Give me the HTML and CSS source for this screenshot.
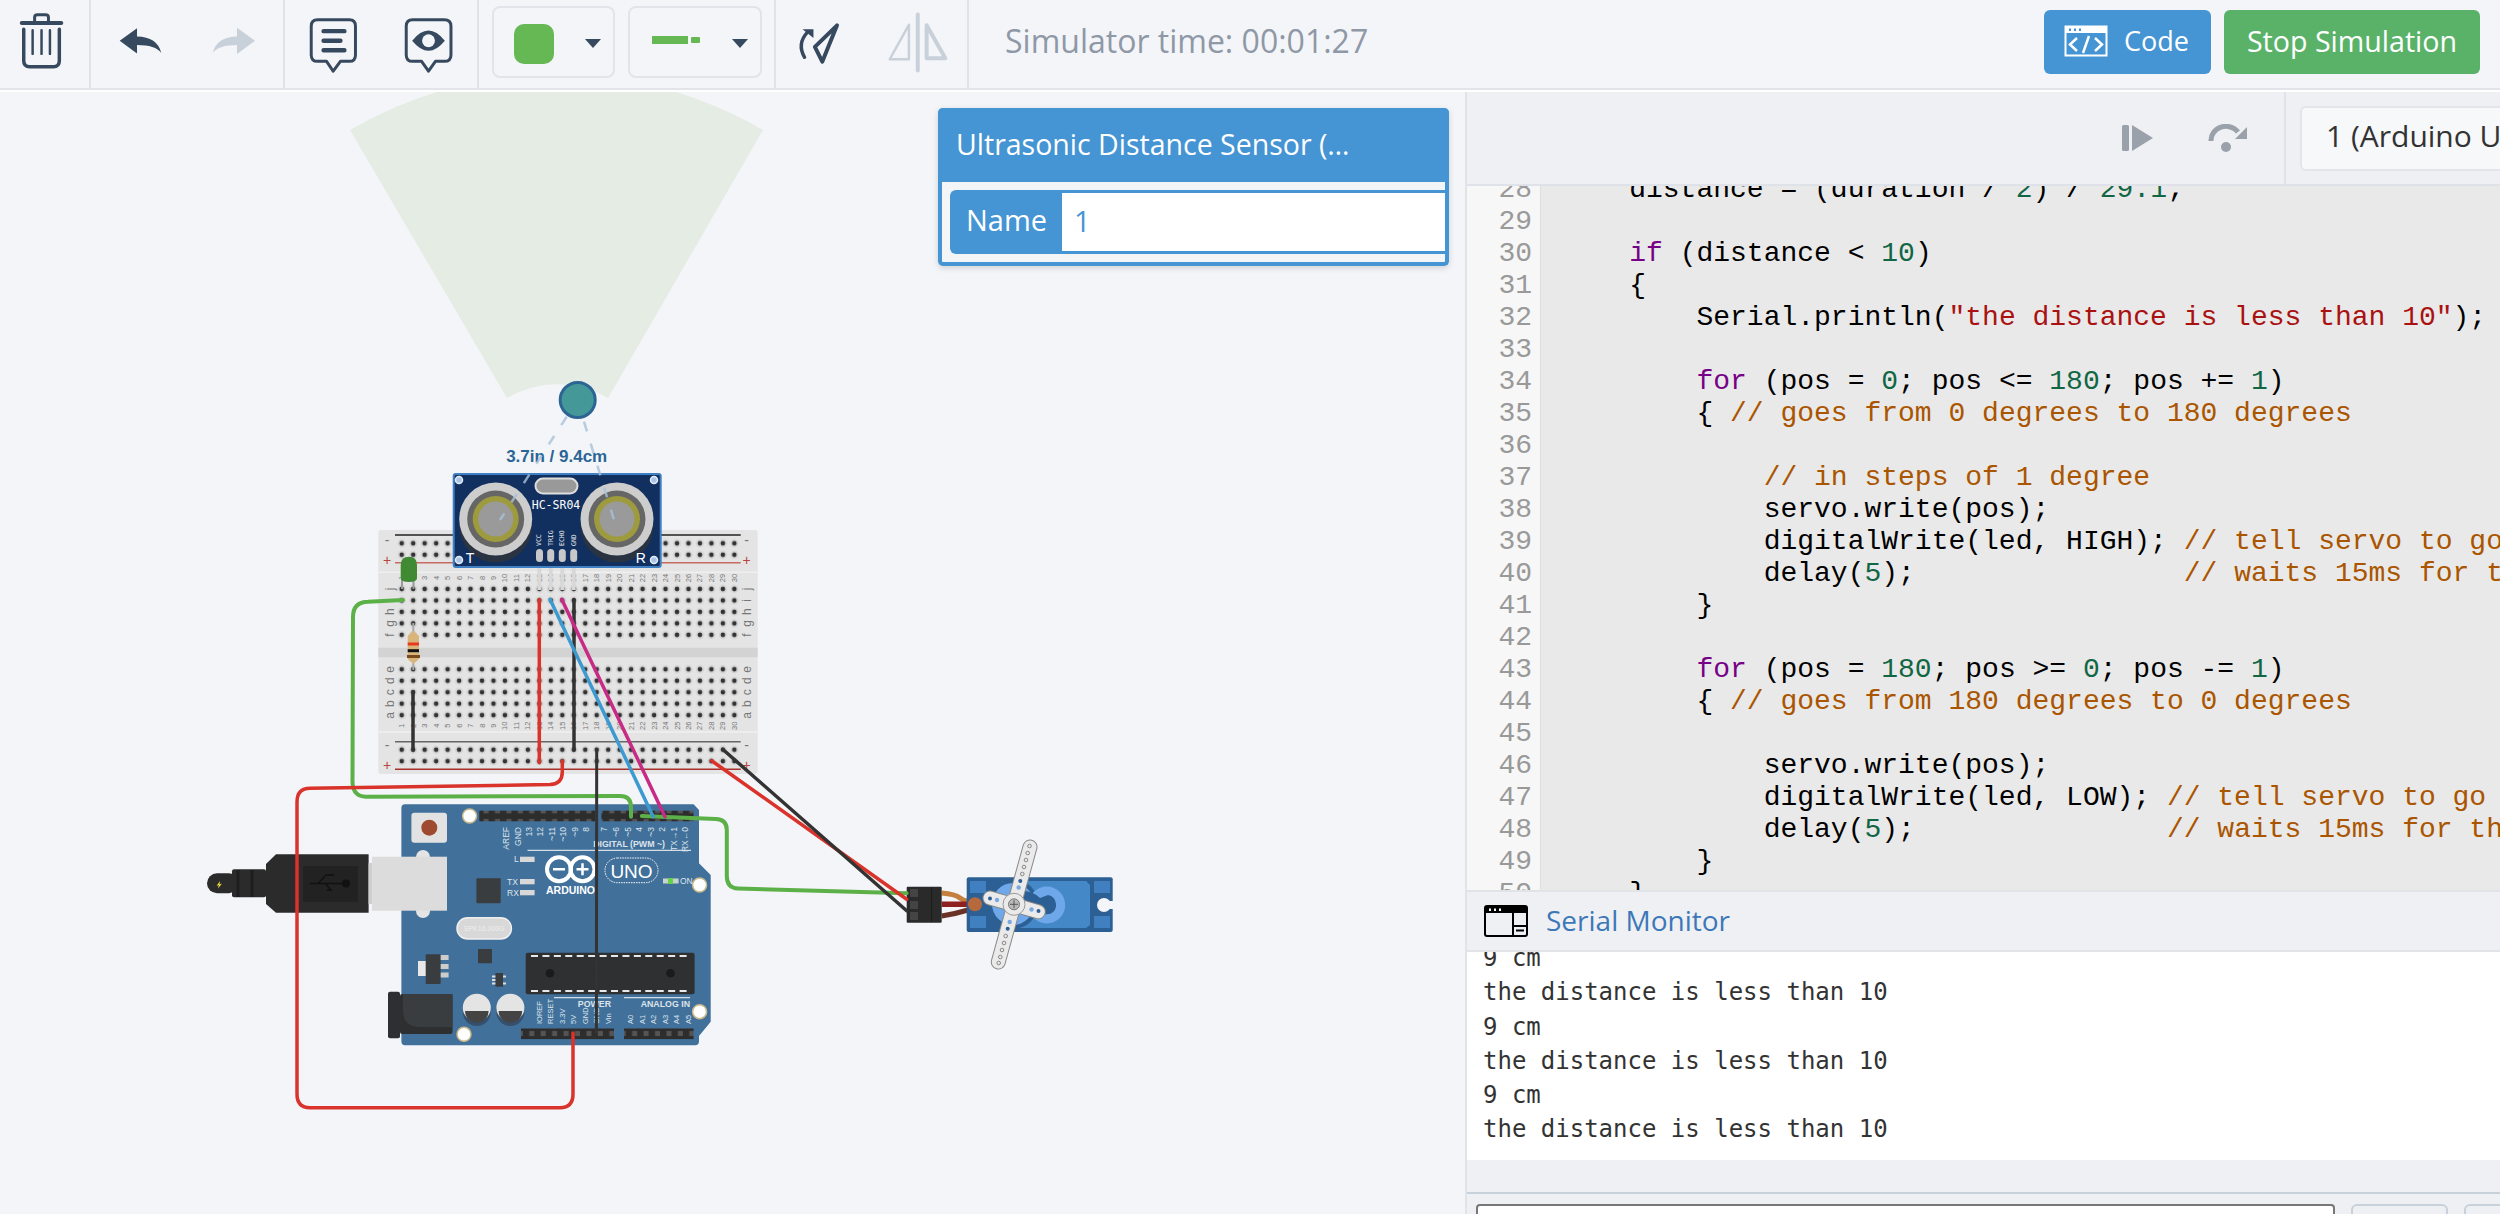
FILE: index.html
```html
<!DOCTYPE html>
<html lang="en">
<head>
    <meta charset="UTF-8">
    <title>Simulator</title>
    <link rel="stylesheet" href="styles.css">
</head>
<body>
    <header class="toolbar">
        <div class="tool-group group-trash">
            <svg class="tool-icon" width="90" height="88" viewBox="0 0 90 88">
                <g fill="none" stroke="#36495f" stroke-width="3.5" stroke-linecap="round">
                    <path d="M22 22.7H62" stroke-width="4"/>
                    <path d="M35 21V17Q35 14.5 38 14.5H46Q49 14.5 49 17V21" stroke-width="3"/>
                    <path d="M24 29V61Q24 67 30 67H54Q60 67 60 61V29"/>
                    <path d="M33 30V54M42 30V54M50.5 30V54" stroke-width="2.5"/>
                </g>
            </svg>
        </div>
        <div class="tool-group group-history">
            <svg class="tool-icon" width="194" height="88" viewBox="91 0 194 88">
                <path d="M120 40.7L137.5 28V36.5Q158 37 162 53Q156 45 137.5 45V53.5Z" fill="#36495f"/>
                <path d="M256.7 40.7L238.5 27.5V36.5Q218 37 214 53Q220 45 238.5 45V54Z" fill="#c8d0da"/>
            </svg>
        </div>
        <div class="tool-group group-notes">
            <svg class="tool-icon" width="194" height="88" viewBox="285 0 194 88">
                <g fill="none" stroke="#36495f" stroke-width="3" stroke-linejoin="round">
                    <path d="M318 19.5H350Q356.2 19.5 356.2 26V55Q356.2 61.5 350 61.5H341L333.7 71.5L327 61.5H318Q311.5 61.5 311.5 55V26Q311.5 19.5 318 19.5Z"/>
                    <path d="M414 19.5H446Q452.7 19.5 452.7 26V55Q452.7 61.5 446 61.5H437L430 71.5L423 61.5H414Q407.5 61.5 407.5 55V26Q407.5 19.5 414 19.5Z"/>
                    <path d="M324 31H345M324 40.7H341M324 50.3H345" stroke-width="4.5" stroke-linecap="round"/>
                </g>
                <path d="M413.5 40.7Q430 20 446.5 40.7Q430 61 413.5 40.7Z" fill="#36495f"/>
                <circle cx="430" cy="40.7" r="6.5" fill="#f3f5f8"/>
            </svg>
        </div>
        <div class="tool-group group-style">
            <button class="style-btn style-fill"><span class="swatch"></span><span class="caret"></span></button>
            <button class="style-btn style-line"><span class="line-long"></span><span class="line-short"></span><span class="caret"></span></button>
        </div>
        <div class="tool-group group-transform">
            <svg class="tool-icon" width="194" height="88" viewBox="776 0 194 88">
                <path d="M838 25L815.5 47L823 62Z" fill="none" stroke="#36495f" stroke-width="4" stroke-linejoin="round"/>
                <path d="M805 57.5Q797 44 808 32" fill="none" stroke="#36495f" stroke-width="3.5" stroke-linecap="round"/>
                <path d="M803 29H814V38Z" fill="#36495f"/>
                <path d="M920 14V71" stroke="#c8d0da" stroke-width="4" stroke-linecap="round"/>
                <path d="M911 24.5L891.5 59.5H911Z" fill="none" stroke="#c8d0da" stroke-width="2.5" stroke-linejoin="round"/>
                <path d="M929 25L948 58.5H929Z" fill="none" stroke="#c8d0da" stroke-width="4" stroke-linejoin="round"/>
            </svg>
        </div>
        <div class="sim-time">Simulator time: 00:01:27</div>
        <div class="sim-actions">
            <button class="btn btn-code">
                <svg width="44" height="32" viewBox="0 0 44 32">
                    <path d="M1.5 1.5H42.5V30.5H1.5Z" fill="none" stroke="#fff" stroke-width="2"/>
                    <path d="M1 1H43V8H1Z" fill="#fff"/>
                    <path d="M5 3.5H7V6H5ZM10 3.5H12V6H10ZM15 3.5H17V6H15Z" fill="#4594d3"/>
                    <path d="M13 13L6 19.5L13 26M31 13L38 19.5L31 26M25 11L19 28" fill="none" stroke="#fff" stroke-width="2.5"/>
                </svg>
                Code
            </button>
            <button class="btn btn-stop">Stop Simulation</button>
        </div>
    </header>

    <div class="workspace">
        <main class="canvas">
            <svg class="circuit" width="1465" height="1122" viewBox="0 92 1465 1122">
                <defs>
                    <pattern id="holes" x="0" y="0" width="11.47" height="11.47" patternUnits="userSpaceOnUse">
                        <circle cx="5.735" cy="5.735" r="4.2" fill="#d5d5d5"/>
                        <circle cx="5.735" cy="5.735" r="2.3" fill="#333"/>
                    </pattern>
                    <pattern id="pins" x="0" y="0" width="11.43" height="10.6" patternUnits="userSpaceOnUse">
                        <rect width="11.43" height="10.6" fill="#2d2d2d"/>
                        <rect x="3.5" y="2.8" width="5" height="5" fill="#555"/>
                    </pattern>
                    <g id="col-numbers">
                        <text x="401.7" y="0" transform="rotate(-90 401.7 0)">1</text>
                        <text x="413.2" y="0" transform="rotate(-90 413.2 0)">2</text>
                        <text x="424.6" y="0" transform="rotate(-90 424.6 0)">3</text>
                        <text x="436.1" y="0" transform="rotate(-90 436.1 0)">4</text>
                        <text x="447.6" y="0" transform="rotate(-90 447.6 0)">5</text>
                        <text x="459.1" y="0" transform="rotate(-90 459.1 0)">6</text>
                        <text x="470.5" y="0" transform="rotate(-90 470.5 0)">7</text>
                        <text x="482" y="0" transform="rotate(-90 482 0)">8</text>
                        <text x="493.5" y="0" transform="rotate(-90 493.5 0)">9</text>
                        <text x="504.9" y="0" transform="rotate(-90 504.9 0)">10</text>
                        <text x="516.4" y="0" transform="rotate(-90 516.4 0)">11</text>
                        <text x="527.9" y="0" transform="rotate(-90 527.9 0)">12</text>
                        <text x="539.3" y="0" transform="rotate(-90 539.3 0)">13</text>
                        <text x="550.8" y="0" transform="rotate(-90 550.8 0)">14</text>
                        <text x="562.3" y="0" transform="rotate(-90 562.3 0)">15</text>
                        <text x="573.8" y="0" transform="rotate(-90 573.8 0)">16</text>
                        <text x="585.2" y="0" transform="rotate(-90 585.2 0)">17</text>
                        <text x="596.7" y="0" transform="rotate(-90 596.7 0)">18</text>
                        <text x="608.2" y="0" transform="rotate(-90 608.2 0)">19</text>
                        <text x="619.6" y="0" transform="rotate(-90 619.6 0)">20</text>
                        <text x="631.1" y="0" transform="rotate(-90 631.1 0)">21</text>
                        <text x="642.6" y="0" transform="rotate(-90 642.6 0)">22</text>
                        <text x="654" y="0" transform="rotate(-90 654 0)">23</text>
                        <text x="665.5" y="0" transform="rotate(-90 665.5 0)">24</text>
                        <text x="677" y="0" transform="rotate(-90 677 0)">25</text>
                        <text x="688.5" y="0" transform="rotate(-90 688.5 0)">26</text>
                        <text x="699.9" y="0" transform="rotate(-90 699.9 0)">27</text>
                        <text x="711.4" y="0" transform="rotate(-90 711.4 0)">28</text>
                        <text x="722.9" y="0" transform="rotate(-90 722.9 0)">29</text>
                        <text x="734.3" y="0" transform="rotate(-90 734.3 0)">30</text>
                    </g>
                    <g id="row-letters">
                        <text x="0" y="589" transform="rotate(-90 0 589)">j</text>
                        <text x="0" y="600.3" transform="rotate(-90 0 600.3)">i</text>
                        <text x="0" y="611.7" transform="rotate(-90 0 611.7)">h</text>
                        <text x="0" y="623.3" transform="rotate(-90 0 623.3)">g</text>
                        <text x="0" y="635" transform="rotate(-90 0 635)">f</text>
                        <text x="0" y="669.3" transform="rotate(-90 0 669.3)">e</text>
                        <text x="0" y="680.7" transform="rotate(-90 0 680.7)">d</text>
                        <text x="0" y="692.3" transform="rotate(-90 0 692.3)">c</text>
                        <text x="0" y="703.7" transform="rotate(-90 0 703.7)">b</text>
                        <text x="0" y="715.3" transform="rotate(-90 0 715.3)">a</text>
                    </g>
                </defs>

                <!-- sensor range -->
                <path d="M350 130A410 410 0 0 1 763 130L608 398A100 100 0 0 0 507 398Z" fill="#e5ece4"/>
                <circle cx="577.7" cy="400" r="17.5" fill="#459898" stroke="#2c6594" stroke-width="3"/>
                <text class="range-label" x="556.7" y="462">3.7in / 9.4cm</text>

                <!-- breadboard -->
                <rect x="378.3" y="530" width="379.4" height="244" rx="3" fill="#e4e4e4"/>
                <path d="M378.3 572.3H757.7M378.3 732H757.7" stroke="#efefef" stroke-width="1.5"/>
                <rect x="378.3" y="647.7" width="379.4" height="9.6" fill="#d3d3d3"/>
                <path d="M395 535H740.7" stroke="#222" stroke-width="1.5"/>
                <path d="M395 562.7H740.7" stroke="#c76a62" stroke-width="1.5"/>
                <path d="M395 741.7H740.7" stroke="#666" stroke-width="1.5"/>
                <path d="M395 769.3H740.7" stroke="#a8302a" stroke-width="1.5"/>
                <rect transform="translate(396 537.6)" width="344.1" height="22.94" fill="url(#holes)"/>
                <rect transform="translate(396 583.27)" width="344.1" height="57.35" fill="url(#holes)"/>
                <rect transform="translate(396 663.57)" width="344.1" height="57.35" fill="url(#holes)"/>
                <rect transform="translate(396 744)" width="344.1" height="22.94" fill="url(#holes)"/>
                <use href="#col-numbers" y="578"/>
                <use href="#col-numbers" y="725.7"/>
                <use href="#row-letters" x="390"/>
                <use href="#row-letters" x="746.7"/>
                <g class="bb-sign-minus">
                    <text x="387" y="545">-</text><text x="746.7" y="545">-</text>
                    <text x="387" y="750">-</text><text x="746.7" y="750">-</text>
                </g>
                <g class="bb-sign-plus">
                    <text x="387" y="565">+</text><text x="746.7" y="565">+</text>
                    <text x="387" y="770">+</text><text x="746.7" y="770">+</text>
                </g>

                <!-- led and resistor -->
                <path d="M402 576V589M413.5 576V589" stroke="#999" stroke-width="2"/>
                <path d="M400.7 578V565Q400.7 556.7 409 556.7Q417 556.7 417 565V578Q417 582 409 582Q400.7 582 400.7 578Z" fill="#3f8a33"/>
                <path d="M413.3 623V670" stroke="#aaa" stroke-width="2"/>
                <path d="M413.3 630.7L419 636V659L413.3 664L407.7 659V636Z" fill="#d9b57b"/>
                <path d="M407.7 644H419" stroke="#e8391f" stroke-width="3"/>
                <path d="M407.7 650.7H419" stroke="#111" stroke-width="3"/>
                <path d="M407 656.5H420" stroke="#7a4a1e" stroke-width="3"/>

                <!-- arduino -->
                <path d="M405 804.3H693.6L699 810V863.3L710.7 875V1021.7L699 1036V1041Q699 1045.3 695 1045.3H405Q401.4 1045.3 401.4 1041V808Q401.4 804.3 405 804.3Z" fill="#41709a"/>
                <rect x="416" y="850" width="14" height="68" rx="7" fill="#e4e4e4"/>
                <rect x="479.3" y="810.7" width="116.1" height="10.6" fill="url(#pins)"/>
                <rect x="601.4" y="810.7" width="92.2" height="10.6" fill="url(#pins)"/>
                <rect x="521" y="1028.5" width="93" height="10.6" fill="url(#pins)"/>
                <rect x="624" y="1028.5" width="69.6" height="10.6" fill="url(#pins)"/>
                <rect x="411.4" y="812.7" width="35.6" height="30" rx="3" fill="#e2e2e2"/>
                <circle cx="429.3" cy="827.7" r="8" fill="#9e4a30"/>
                <g fill="#fff" stroke="#c9b98a" stroke-width="1.5">
                    <circle cx="469.6" cy="816" r="7"/>
                    <circle cx="699.6" cy="885" r="7"/>
                    <circle cx="699.6" cy="1011.7" r="7"/>
                    <circle cx="464" cy="1034.3" r="7"/>
                </g>
                <rect x="476.4" y="878.3" width="24.3" height="25" rx="1" fill="#3a3d40"/>
                <g fill="#d8d8d8">
                    <rect x="520" y="856.7" width="14.6" height="5.3"/>
                    <rect x="520" y="879" width="14.6" height="5.3"/>
                    <rect x="520" y="890" width="14.6" height="5.3"/>
                </g>
                <g class="ard-label">
                    <text x="514" y="862">L</text>
                    <text x="507" y="885">TX</text>
                    <text x="507" y="896">RX</text>
                    <text x="680" y="884">ON</text>
                </g>
                <g class="ard-heading">
                    <text x="665" y="847">DIGITAL (PWM ~)</text>
                    <text x="611" y="1007">POWER</text>
                    <text x="690" y="1007">ANALOG IN</text>
                </g>
                <path d="M527.5 850.3H691M554 997.7H611.4M624 997.7H690" stroke="#d5dde6" stroke-width="1.2"/>
                <g class="ard-pin-top">
                    <text transform="translate(509 827) rotate(-90)">AREF</text>
                    <text transform="translate(520.5 827) rotate(-90)">GND</text>
                    <text transform="translate(532 827) rotate(-90)">13</text>
                    <text transform="translate(543.3 827) rotate(-90)">12</text>
                    <text transform="translate(554.7 827) rotate(-90)">~11</text>
                    <text transform="translate(566 827) rotate(-90)">~10</text>
                    <text transform="translate(577.5 827) rotate(-90)">~9</text>
                    <text transform="translate(589 827) rotate(-90)">8</text>
                    <text transform="translate(607 827) rotate(-90)">7</text>
                    <text transform="translate(619 827) rotate(-90)">~6</text>
                    <text transform="translate(630.5 827) rotate(-90)">~5</text>
                    <text transform="translate(642 827) rotate(-90)">4</text>
                    <text transform="translate(653.5 827) rotate(-90)">~3</text>
                    <text transform="translate(665 827) rotate(-90)">2</text>
                    <text transform="translate(676.5 827) rotate(-90)">TX→1</text>
                    <text transform="translate(688 827) rotate(-90)">RX←0</text>
                </g>
                <g class="ard-pin-bottom">
                    <text transform="translate(542 1024) rotate(-90)">IOREF</text>
                    <text transform="translate(553 1024) rotate(-90)">RESET</text>
                    <text transform="translate(564.5 1024) rotate(-90)">3.3V</text>
                    <text transform="translate(576 1024) rotate(-90)">5V</text>
                    <text transform="translate(587.5 1024) rotate(-90)">GND</text>
                    <text transform="translate(599 1024) rotate(-90)">GND</text>
                    <text transform="translate(610.5 1024) rotate(-90)">Vin</text>
                    <text transform="translate(633 1024) rotate(-90)">A0</text>
                    <text transform="translate(644.5 1024) rotate(-90)">A1</text>
                    <text transform="translate(656 1024) rotate(-90)">A2</text>
                    <text transform="translate(667.5 1024) rotate(-90)">A3</text>
                    <text transform="translate(679 1024) rotate(-90)">A4</text>
                    <text transform="translate(690.5 1024) rotate(-90)">A5</text>
                </g>
                <g fill="none" stroke="#fff" stroke-width="4">
                    <circle cx="559" cy="869.3" r="12"/>
                    <circle cx="582.5" cy="869.3" r="12"/>
                </g>
                <path d="M553 869.3H565M576.5 869.3H588.5M582.5 863.3V875.3" stroke="#fff" stroke-width="2.5"/>
                <text class="ard-logo" x="546" y="893.5">ARDUINO</text>
                <rect x="605" y="858" width="53" height="24.7" rx="12.3" fill="none" stroke="#fff" stroke-width="1" stroke-dasharray="1.5 1"/>
                <text class="ard-uno" x="631.5" y="877.5">UNO</text>
                <rect x="663" y="878.5" width="15.6" height="5" fill="#c9d3cc"/>
                <rect x="668" y="878" width="5" height="6" fill="#62d24a"/>
                <rect x="457" y="917.7" width="54.4" height="21.3" rx="10.6" fill="#d8d8d8" stroke="#eee" stroke-width="1.5"/>
                <text class="ard-crystal" x="484.2" y="931">SPK16.000G</text>
                <rect x="418" y="961" width="8" height="15" fill="#e8e8e8"/>
                <rect x="425.7" y="954.3" width="15" height="29.7" rx="1" fill="#3a3d40"/>
                <path d="M440.7 957.5H448.6M440.7 966.5H448.6M440.7 975H448.6" stroke="#ccc" stroke-width="5"/>
                <rect x="478" y="949" width="14" height="14.3" rx="1" fill="#3a3d40"/>
                <rect x="495.4" y="973" width="7.6" height="13.7" fill="#3a3d40"/>
                <path d="M492 976.5H495.4M492 980H495.4M492 983.5H495.4M503 976.5H506M503 983.5H506" stroke="#ddd" stroke-width="2"/>
                <rect x="525.7" y="952.7" width="168.9" height="41.6" rx="2" fill="#2f3032"/>
                <path d="M531 956H691M531 991H691" stroke="#e8e8e8" stroke-width="2" stroke-dasharray="7 4.43"/>
                <circle cx="550" cy="973.3" r="4.3" fill="#1b1b1b"/>
                <circle cx="670.4" cy="973.3" r="4.3" fill="#1b1b1b"/>
                <rect x="388" y="991.7" width="12" height="46.6" rx="2" fill="#2e2f31"/>
                <rect x="400" y="994" width="52.5" height="40" rx="2" fill="#2e2f31"/>
                <path d="M403 994H452.5V1027H420Q403 1027 403 1010Z" fill="#3a3d40"/>
                <g>
                    <circle cx="476.8" cy="1012" r="14" fill="#35506c"/>
                    <circle cx="510.4" cy="1012" r="14" fill="#35506c"/>
                    <circle cx="476.8" cy="1007.7" r="14" fill="#e4e4e4"/>
                    <circle cx="510.4" cy="1007.7" r="14" fill="#e4e4e4"/>
                    <path d="M465 1011H488.6A11.5 11.5 0 0 1 465 1011ZM498.6 1011H522.2A11.5 11.5 0 0 1 498.6 1011Z" fill="#444"/>
                </g>

                <!-- usb cable -->
                <rect x="207" y="873.3" width="32" height="20" rx="10" fill="#2b2b2b"/>
                <path d="M216.5 886L220 881L219.5 884.5L222 883.5L218 888.5L218.8 885Z" fill="#f2e13a"/>
                <rect x="232" y="869.3" width="34" height="28" rx="2" fill="#2b2b2b"/>
                <path d="M238 870V897M252 870V897" stroke="#1e1e1e" stroke-width="3"/>
                <path d="M276 854.3H368.6V912.7H276L266 904V864Z" fill="#2b2b2b"/>
                <rect x="303" y="866" width="55" height="35.7" fill="#222"/>
                <path d="M310 883.5H346M318 883.5L326 875H334M325 883.5L331 890H327" fill="none" stroke="#111" stroke-width="1.5"/>
                <circle cx="346" cy="883.5" r="4" fill="#111"/>
                <rect x="368.6" y="863" width="4" height="41" fill="#cfcfcf"/>
                <rect x="372" y="856.7" width="75" height="54" fill="#dcdcdc"/>

                <!-- hc-sr04 -->
                <path d="M539.3 567V590M550.7 567V590M562.3 567V590M573.7 567V590" stroke="#d8d8d8" stroke-width="4"/>
                <rect x="453.7" y="474" width="207" height="93" rx="2" fill="#12305f" stroke="#3f7fc4" stroke-width="2"/>
                <g fill="#a9c4e6" stroke="#e4edf7" stroke-width="1.5">
                    <circle cx="459" cy="480" r="3.5"/>
                    <circle cx="654" cy="480" r="3.5"/>
                    <circle cx="459" cy="560" r="3.5"/>
                    <circle cx="654" cy="560" r="3.5"/>
                </g>
                <rect x="535.5" y="478.5" width="42" height="15" rx="7.5" fill="#999" stroke="#ddd" stroke-width="2"/>
                <circle cx="495.7" cy="526" r="36.5" fill="#2a3342"/>
                <circle cx="617" cy="526" r="36.5" fill="#2a3342"/>
                <circle cx="495.7" cy="519" r="36.5" fill="#cdcdcd"/>
                <circle cx="617" cy="519" r="36.5" fill="#cdcdcd"/>
                <circle cx="495.7" cy="519" r="28.5" fill="#666"/>
                <circle cx="617" cy="519" r="28.5" fill="#666"/>
                <circle cx="495.7" cy="519" r="23" fill="#9d9b3d"/>
                <circle cx="617" cy="519" r="23" fill="#9d9b3d"/>
                <circle cx="495.7" cy="519" r="17.5" fill="#9a9a9a"/>
                <circle cx="617" cy="519" r="17.5" fill="#9a9a9a"/>
                <text class="hc-name" x="556" y="508.5">HC-SR04</text>
                <text class="hc-corner" x="470" y="563">T</text>
                <text class="hc-corner" x="640.7" y="563">R</text>
                <g fill="#c8c8c8">
                    <rect x="536" y="549" width="7" height="13" rx="3.5"/>
                    <rect x="547.2" y="549" width="7" height="13" rx="3.5"/>
                    <rect x="558.8" y="549" width="7" height="13" rx="3.5"/>
                    <rect x="570.2" y="549" width="7" height="13" rx="3.5"/>
                </g>
                <g class="hc-pin">
                    <text transform="translate(539.3 546) rotate(-90)">VCC</text>
                    <text transform="translate(550.7 546) rotate(-90)">TRIG</text>
                    <text transform="translate(562.3 546) rotate(-90)">ECHO</text>
                    <text transform="translate(573.7 546) rotate(-90)">GND</text>
                </g>
                <g stroke="#a9c2da" stroke-width="2.5" stroke-dasharray="10 13" opacity="0.8">
                    <path d="M566.7 416.7L500 520"/>
                    <path d="M584 421.7L614 520"/>
                </g>

                <!-- servo -->
                <path d="M941.7 893Q955 894 960 898T968 900" fill="none" stroke="#c57f3f" stroke-width="5"/>
                <path d="M941.7 904.3H985" stroke="#8f2020" stroke-width="5.5"/>
                <path d="M941.7 916Q955 914 968 910" fill="none" stroke="#6a3226" stroke-width="5"/>
                <rect x="966.7" y="877.3" width="146" height="54.7" rx="2" fill="#2c5f93"/>
                <path d="M1002 881H1086L1090 885V925L1086 928H1002Z" fill="#4488c8"/>
                <g fill="#4080c0">
                    <rect x="970" y="881" width="16" height="12"/>
                    <rect x="970" y="916" width="16" height="12"/>
                    <rect x="1094" y="881" width="16" height="12"/>
                    <rect x="1094" y="916" width="16" height="12"/>
                </g>
                <circle cx="1104" cy="905" r="7" fill="#f3f5f8"/>
                <rect x="1104" y="901" width="9" height="8" fill="#f3f5f8"/>
                <circle cx="1013" cy="904" r="25" fill="#2c5f93"/>
                <circle cx="1013" cy="904" r="21" fill="#6fa8ea"/>
                <circle cx="1046.7" cy="905" r="18.5" fill="#6fa8ea"/>
                <path d="M1020 890Q1035 892 1040 898L1048 895A10 10 0 0 1 1050 914Q1040 914 1032 918Z" fill="#2c5f93"/>
                <circle cx="975" cy="904.3" r="7" fill="#b5693d"/>
                <g stroke="#888" stroke-width="15" stroke-linecap="round">
                    <path d="M1030 847L998.3 962"/>
                    <path d="M990 898L1038.3 911.7"/>
                </g>
                <g stroke="#eaeaea" stroke-width="13" stroke-linecap="round">
                    <path d="M1030 847L998.3 962"/>
                    <path d="M990 898L1038.3 911.7"/>
                </g>
                <g fill="#eaeaea" stroke="#888" stroke-width="1">
                    <circle cx="1029.5" cy="846" r="1.8"/>
                    <circle cx="1027.7" cy="853" r="1.8"/>
                    <circle cx="1026" cy="860" r="1.8"/>
                    <circle cx="1024" cy="867" r="1.8"/>
                    <circle cx="1022.3" cy="874" r="1.8"/>
                    <circle cx="1005.7" cy="936" r="1.8"/>
                    <circle cx="1004" cy="943" r="1.8"/>
                    <circle cx="1002" cy="950" r="1.8"/>
                    <circle cx="1000.3" cy="957" r="1.8"/>
                    <circle cx="998.7" cy="963" r="1.8"/>
                </g>
                <g fill="#2c5f93">
                    <circle cx="1020.3" cy="881" r="2"/>
                    <circle cx="1007.7" cy="928.7" r="2"/>
                    <circle cx="990" cy="898.5" r="2"/>
                    <circle cx="1038.5" cy="911" r="2"/>
                </g>
                <g fill="#7aa9e0">
                    <circle cx="1018.7" cy="887.5" r="2.2"/>
                    <circle cx="1009.7" cy="922" r="2.2"/>
                    <circle cx="997" cy="900" r="2.2"/>
                    <circle cx="1031.5" cy="909.5" r="2.2"/>
                </g>
                <circle cx="1014" cy="904.3" r="11" fill="#eaeaea" stroke="#999" stroke-width="1"/>
                <circle cx="1014" cy="904.3" r="5.5" fill="#bbb" stroke="#777" stroke-width="1"/>
                <path d="M1010 904.3H1018M1014 900.3V908.3" stroke="#555" stroke-width="1"/>
                <rect x="906.7" y="886.7" width="35" height="36" rx="1" fill="#2a2a2a"/>
                <path d="M931.5 887V922" stroke="#1b1b1b" stroke-width="1"/>
                <g fill="#444">
                    <rect x="910" y="889" width="8" height="8"/>
                    <rect x="910" y="901" width="8" height="8"/>
                    <rect x="910" y="912" width="8" height="8"/>
                </g>

                <!-- wires -->
                <g fill="none" stroke-linecap="round">
                    <path d="M403 600L368 601.7Q353 602 353 617L352.5 782Q353 796.7 366 796.7L620 796Q631 796 631 807V816.7" stroke="#5cb048" stroke-width="4"/>
                    <path d="M641.8 816L716 819Q726.8 819.5 726.8 830V876Q726.8 888 738 888.5L906.7 893.3" stroke="#5cb048" stroke-width="4"/>
                    <path d="M562.3 761V772Q562.3 784 550 784.5L310 788.3Q297 788.5 297 802V1094Q297 1107.7 310 1107.7H560Q573 1107.7 573 1094V1033" stroke="#d9332b" stroke-width="3.5"/>
                    <path d="M539.3 599.5V762.7" stroke="#d9332b" stroke-width="3.5"/>
                    <path d="M574 599.5V750" stroke="#333" stroke-width="3.5"/>
                    <path d="M413 691.7V750" stroke="#333" stroke-width="3.5"/>
                    <path d="M550 599.3L653.2 816.7" stroke="#3d9ad1" stroke-width="3.5"/>
                    <path d="M561.7 599.3L665 816.7" stroke="#c72b85" stroke-width="3.5"/>
                    <path d="M596.7 749.3L596.4 1033" stroke="#333" stroke-width="3"/>
                    <path d="M711.7 760.7L906.7 899.3" stroke="#d9332b" stroke-width="3.5"/>
                    <path d="M722.7 749.3L906.7 910.7" stroke="#333" stroke-width="3.5"/>
                </g>
            </svg>

            <div class="inspector">
                <div class="inspector-title">Ultrasonic Distance Sensor (…</div>
                <div class="inspector-body">
                    <div class="field">
                        <span class="field-label">Name</span>
                        <span class="field-value">1</span>
                    </div>
                </div>
            </div>
        </main>

        <aside class="panel">
            <div class="debug-bar">
                <svg class="debug-icon" width="32" height="28" viewBox="0 0 32 28">
                    <rect x="0" y="1" width="7" height="26" rx="1.5" fill="#9aa1aa"/>
                    <path d="M10 1L31 14L10 27Z" fill="#9aa1aa"/>
                </svg>
                <svg class="debug-icon" width="42" height="28" viewBox="0 0 42 28">
                    <path d="M5 17A15 14 0 0 1 32 8" fill="none" stroke="#9aa1aa" stroke-width="5"/>
                    <path d="M41 3V15H29Z" fill="#9aa1aa"/>
                    <circle cx="20" cy="23" r="5" fill="#9aa1aa"/>
                </svg>
                <div class="debug-sep"></div>
                <div class="device-select">1 (Arduino Uno R3)</div>
            </div>
            <div class="editor">
                <div class="gutter">
                    <div>28</div><div>29</div><div>30</div><div>31</div><div>32</div><div>33</div>
                    <div>34</div><div>35</div><div>36</div><div>37</div><div>38</div><div>39</div>
                    <div>40</div><div>41</div><div>42</div><div>43</div><div>44</div><div>45</div>
                    <div>46</div><div>47</div><div>48</div><div>49</div><div>50</div>
                </div>
<pre class="code">    distance = (duration / <span class="num">2</span>) / <span class="num">29.1</span>;

    <span class="kw">if</span> (distance &lt; <span class="num">10</span>)
    {
        Serial.println(<span class="str">"the distance is less than 10"</span>);

        <span class="kw">for</span> (pos = <span class="num">0</span>; pos &lt;= <span class="num">180</span>; pos += <span class="num">1</span>)
        { <span class="cmt">// goes from 0 degrees to 180 degrees</span>

            <span class="cmt">// in steps of 1 degree</span>
            servo.write(pos);
            digitalWrite(led, HIGH); <span class="cmt">// tell servo to go to position in variable 'pos'</span>
            delay(<span class="num">5</span>);                <span class="cmt">// waits 15ms for the servo to reach the position</span>
        }

        <span class="kw">for</span> (pos = <span class="num">180</span>; pos &gt;= <span class="num">0</span>; pos -= <span class="num">1</span>)
        { <span class="cmt">// goes from 180 degrees to 0 degrees</span>

            servo.write(pos);
            digitalWrite(led, LOW); <span class="cmt">// tell servo to go to position in variable 'pos'</span>
            delay(<span class="num">5</span>);               <span class="cmt">// waits 15ms for the servo to reach the position</span>
        }
    }</pre>
            </div>
            <div class="serial-head">
                <svg width="44" height="32" viewBox="0 0 44 32">
                    <rect x="1" y="1" width="42" height="30" rx="2" fill="none" stroke="#000" stroke-width="2"/>
                    <path d="M1 1H43V8H1Z" fill="#000"/>
                    <path d="M5 3.5H7V6H5ZM10 3.5H12V6H10ZM15 3.5H17V6H15Z" fill="#fff"/>
                    <path d="M29 8V31M29 21H43" stroke="#000" stroke-width="2"/>
                    <path d="M32 25.5H40" stroke="#000" stroke-width="2"/>
                </svg>
                <span class="serial-title">Serial Monitor</span>
            </div>
            <div class="serial-output">
                <div class="serial-lines">
                    <div>9 cm</div>
                    <div>the distance is less than 10</div>
                    <div>9 cm</div>
                    <div>the distance is less than 10</div>
                    <div>9 cm</div>
                    <div>the distance is less than 10</div>
                </div>
            </div>
            <div class="serial-gap"></div>
            <div class="serial-input">
                <div class="serial-field"></div>
                <div class="serial-btn"></div>
                <div class="serial-btn"></div>
            </div>
        </aside>
    </div>
</body>
</html>
```
FILE: styles.css
```css
html, body {
    margin: 0;
    padding: 0;
    height: 100%;
    overflow: hidden;
}
body {
    font-family: "Open Sans", sans-serif;
    background-color: #f3f5f8;
    color: #333;
}
.toolbar {
    display: flex;
    align-items: stretch;
    height: 88px;
    border-bottom: 2px solid #e2e4e9;
    background-color: #f3f5f8;
}
.tool-group {
    display: flex;
    align-items: flex-start;
    border-right: 2px solid #dfe2e8;
    box-sizing: border-box;
    flex: none;
}
.tool-icon {
    display: block;
}
.group-trash { width: 91px; }
.group-history { width: 194px; }
.group-notes { width: 194px; }
.group-style {
    width: 297px;
    gap: 13px;
    padding: 6px 0 0 13px;
}
.group-transform { width: 193px; }
.style-btn {
    position: relative;
    display: block;
    height: 72px;
    box-sizing: border-box;
    border: 2px solid #e1e4ea;
    border-radius: 8px;
    background: none;
    padding: 0;
}
.style-fill { width: 123px; }
.style-line { width: 134px; }
.swatch {
    position: absolute;
    left: 20px;
    top: 16px;
    width: 40px;
    height: 40px;
    border-radius: 10px;
    background-color: #66b854;
}
.line-long {
    position: absolute;
    left: 22px;
    top: 28px;
    width: 36px;
    height: 8px;
    background-color: #66b854;
}
.line-short {
    position: absolute;
    left: 61px;
    top: 29px;
    width: 9px;
    height: 6px;
    border-radius: 1px;
    background-color: #66b854;
}
.caret {
    position: absolute;
    right: 12px;
    top: 31px;
    border-left: 8px solid transparent;
    border-right: 8px solid transparent;
    border-top: 9px solid #36495f;
}
.sim-time {
    margin-left: 36px;
    line-height: 82px;
    font-size: 32px;
    color: #8f98a6;
}
.sim-actions {
    display: flex;
    gap: 13px;
    margin-left: auto;
    padding: 10px 20px 0 0;
}
.btn {
    display: flex;
    align-items: center;
    height: 64px;
    border: none;
    border-radius: 6px;
    padding: 0 0 3px 0;
    color: white;
    font-family: "Open Sans", sans-serif;
    box-sizing: border-box;
}
.btn-code {
    width: 167px;
    gap: 16px;
    padding-left: 20px;
    background-color: #4594d3;
    font-size: 27px;
}
.btn-stop {
    width: 256px;
    justify-content: center;
    background-color: #5ab269;
    font-size: 28.6px;
}
.workspace {
    display: flex;
    height: 1124px;
    border-top: 2px solid #fff;
}
.canvas {
    position: relative;
    width: 1465px;
    flex: none;
    overflow: hidden;
}
.circuit {
    display: block;
}
.circuit text {
    font-family: "Liberation Sans", sans-serif;
}
.range-label {
    font-size: 17px;
    font-weight: bold;
    fill: #2b6596;
    text-anchor: middle;
}
#col-numbers text,
#row-letters text {
    fill: #777;
    text-anchor: middle;
    dominant-baseline: central;
}
#col-numbers text {
    font-size: 7.5px;
}
#row-letters text {
    font-size: 12px;
}
.bb-sign-minus text {
    font-size: 14px;
    fill: #777;
    text-anchor: middle;
}
.bb-sign-plus text {
    font-size: 14px;
    fill: #b8453e;
    text-anchor: middle;
}
.ard-label text {
    font-size: 8.5px;
    fill: #dde4ec;
}
.ard-heading text {
    font-size: 8.8px;
    font-weight: bold;
    fill: #dde4ec;
    text-anchor: end;
}
.ard-pin-top text {
    font-size: 8.5px;
    fill: #dde4ec;
    text-anchor: end;
}
.ard-pin-bottom text {
    font-size: 7.5px;
    fill: #dde4ec;
}
.ard-logo {
    font-size: 10.5px;
    font-weight: bold;
    fill: #fff;
}
.ard-uno {
    font-size: 19px;
    fill: #fff;
    text-anchor: middle;
}
.ard-crystal {
    font-size: 7px;
    fill: #eee;
    text-anchor: middle;
}
.circuit .hc-name {
    font-family: "DejaVu Sans Mono", monospace;
    font-size: 11.5px;
    fill: #fff;
    text-anchor: middle;
}
.hc-corner {
    font-size: 14px;
    fill: #fff;
    text-anchor: middle;
}
.circuit .hc-pin text {
    font-family: "DejaVu Sans Mono", monospace;
    font-size: 6.5px;
    fill: #eee;
    dominant-baseline: central;
    text-anchor: start;
}
.inspector {
    position: absolute;
    left: 938px;
    top: 16px;
    width: 511px;
    height: 158px;
    box-sizing: border-box;
    border: 4px solid #4594d3;
    border-top: none;
    border-radius: 5px;
    background-color: #f4f5f7;
    box-shadow: 0 2px 6px rgba(0, 0, 0, 0.15);
}
.inspector-title {
    margin: 0 -4px;
    height: 74px;
    line-height: 72px;
    padding-left: 18px;
    border-radius: 5px 5px 0 0;
    background-color: #4594d3;
    color: white;
    font-size: 28.5px;
}
.inspector-body {
    padding: 8px 0 0 8px;
}
.field {
    display: flex;
    height: 64px;
    box-sizing: border-box;
    border: 3px solid #4594d3;
    border-right: none;
    border-radius: 6px 0 0 6px;
    background-color: white;
}
.field-label {
    width: 109px;
    flex: none;
    box-sizing: border-box;
    padding-left: 13px;
    background-color: #4594d3;
    color: white;
    font-size: 29px;
    line-height: 54px;
}
.field-value {
    padding-left: 12px;
    color: #4594d3;
    font-size: 29px;
    line-height: 55px;
}
.panel {
    flex: 1;
    display: flex;
    flex-direction: column;
    box-sizing: border-box;
    min-width: 0;
    border-left: 2px solid #e0e3e8;
    background-color: #eff0f3;
}
.debug-bar {
    display: flex;
    align-items: center;
    height: 94px;
    flex: none;
    box-sizing: border-box;
    border-bottom: 2px solid #dfe2e8;
    padding-left: 655px;
    overflow: hidden;
}
.debug-icon {
    flex: none;
    margin-right: 52px;
}
.debug-icon + .debug-icon {
    margin-right: 36px;
}
.debug-sep {
    width: 2px;
    height: 94px;
    flex: none;
    background-color: #dfe2e8;
}
.device-select {
    flex: none;
    width: 400px;
    height: 65px;
    margin-left: 14px;
    padding-left: 24px;
    box-sizing: border-box;
    border: 2px solid #e3e5ea;
    border-radius: 6px;
    background-color: #f7f8fa;
    color: #333;
    font-size: 30px;
    line-height: 56px;
    white-space: nowrap;
}
.editor {
    display: flex;
    height: 704px;
    flex: none;
    overflow: hidden;
    background-color: #e9e9e9;
    font-family: "Liberation Mono", monospace;
    font-size: 28px;
    line-height: 32px;
}
.gutter {
    width: 74px;
    flex: none;
    box-sizing: border-box;
    margin-top: -12.5px;
    padding-right: 8px;
    height: 736px;
    background-color: #f7f7f7;
    border-right: 1px solid #ddd;
    color: #999;
    text-align: right;
}
.code {
    margin: -12.5px 0 0 0;
    padding-left: 21px;
    font: inherit;
    color: #000;
    white-space: pre;
}
.kw { color: #770088; }
.num { color: #116644; }
.str { color: #aa1111; }
.cmt { color: #aa5500; }
.serial-head {
    display: flex;
    align-items: center;
    gap: 18px;
    height: 62px;
    flex: none;
    box-sizing: border-box;
    padding-left: 17px;
    border-top: 2px solid #e0e3e8;
    border-bottom: 2px solid #e0e3e8;
    color: #3c78b8;
    font-size: 28px;
}
.serial-title {
    margin-top: -3px;
}
.serial-output {
    height: 208px;
    flex: none;
    overflow: hidden;
    background-color: white;
}
.serial-lines {
    margin-top: -11px;
    padding-left: 16px;
    font-family: "DejaVu Sans Mono", monospace;
    font-size: 24px;
    line-height: 34.29px;
    color: #333;
}
.serial-gap {
    height: 32px;
    flex: none;
    border-bottom: 2px solid #c8d0da;
}
.serial-input {
    display: flex;
    gap: 16px;
    flex: 1;
    padding: 10px 0 0 9px;
}
.serial-field {
    width: 859px;
    height: 40px;
    flex: none;
    box-sizing: border-box;
    border: 2px solid #777;
    border-radius: 4px;
    background-color: white;
}
.serial-btn {
    width: 97px;
    height: 40px;
    flex: none;
    box-sizing: border-box;
    border: 2px solid #c8d0da;
    border-radius: 6px;
}
```
